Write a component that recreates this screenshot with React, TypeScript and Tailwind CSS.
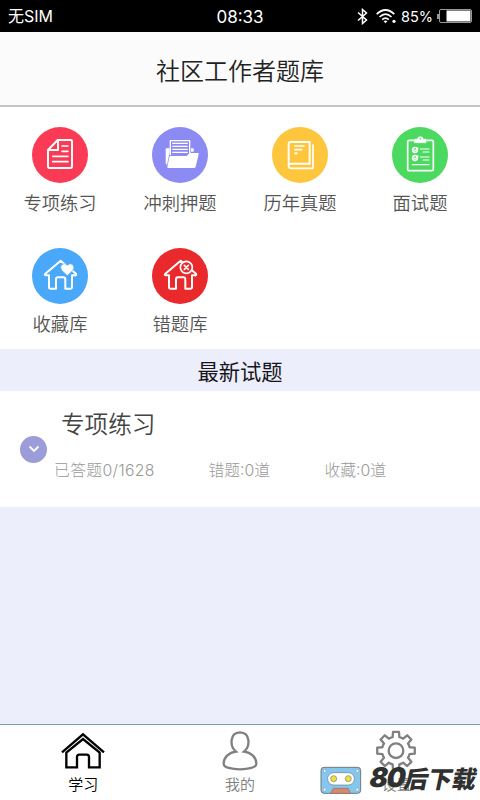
import type { ReactNode } from "react";

const line = {
  fill: "none",
  stroke: "#fff",
  strokeWidth: 6,
  strokeLinejoin: "round",
  strokeLinecap: "round",
} as const;

const HOUSE = "M76 101 L122 62 L168 101 Q171 107 163 106 L156 106 L156 142 Q156 146 151 146 L136 146 L136 119 Q136 112 130 112 L114 112 Q108 112 108 119 L108 146 L92 146 Q87 146 87 142 L87 106 L78 106 Q72 106 76 101Z";

const entries: { label: string; color: string; icon: ReactNode }[] = [
  {
    label: "专项练习",
    color: "bg-[#fb3b55]",
    icon: (
      <g {...line}>
        <path d="M113 59 H152 Q156 59 156 63 V138 Q156 143 151 143 H89 Q84 143 84 138 V89 Z" />
        <path d="M114 60 V89 H85" />
        <path d="M126 77H144M126 93H144M98 108H144M98 124H144" strokeWidth="5" />
      </g>
    ),
  },
  {
    label: "冲刺押题",
    color: "bg-[#8c8af3]",
    icon: (
      <g>
        <path d="M77 87 Q77 84 80 84 H89 V96 L81 134 Q77 132 77 127Z" fill="#fff" />
        <path d="M91 103 V61 H149 V103" {...line} strokeWidth="4" />
        <path d="M98 69H142M98 78H142M98 87H142M98 96H142" {...line} strokeWidth="3.5" />
        <path d="M153 84h8v10h-8z" fill="#fff" />
        <path d="M92 107 H140 L149 98 H174 Q177 98 176 102 L167 139 Q166 143 162 143 H85 Q81 143 82 139 L88 110 Q89 107 92 107Z" fill="#fff" />
      </g>
    ),
  },
  {
    label: "历年真题",
    color: "bg-[#fec63d]",
    icon: (
      <g {...line}>
        <path d="M93 65 H149 V130 H93 Q86 130 86 137 V72 Q86 65 93 65Z" />
        <path d="M86 136 Q86 144 94 144 H159 V74" strokeWidth="5" />
        <path d="M105 77H132M105 88H125M105 99H111" strokeWidth="5" />
      </g>
    ),
  },
  {
    label: "面试题",
    color: "bg-[#4bd960]",
    icon: (
      <g {...line} strokeWidth="5">
        <path d="M101 60 H87 Q83 60 83 64 V147 Q83 151 87 151 H156 Q160 151 160 147 V64 Q160 60 156 60 H141" />
        <path d="M104 57H112Q113 49 121 49T130 57H138V67H104Z" fill="#fff" strokeWidth="2" />
        <circle cx="121" cy="56" r="2.5" fill="#4bd960" stroke="none" />
        <circle cx="105" cy="89" r="7.5" strokeWidth="4" />
        <circle cx="105" cy="113" r="7.5" strokeWidth="4" />
        <path d="M101 88l4 4 9-9M101 112l4 4 9-9M121 86H147M129 95H147M121 110H147M129 119H147M97 133H147" strokeWidth="3.5" />
      </g>
    ),
  },
  {
    label: "收藏库",
    color: "bg-[#4aa8fa]",
    icon: (
      <g transform="translate(0 -4)">
        <path d={HOUSE} {...line} />
        <path d="M142 107 L125 91 Q119 81 125 74 Q134 67 142 76 Q150 67 158 74 Q165 81 159 91Z" fill="#fff" stroke="#4aa8fa" strokeWidth="2" />
      </g>
    ),
  },
  {
    label: "错题库",
    color: "bg-[#e9292b]",
    icon: (
      <g transform="translate(0 -4)">
        <path d={HOUSE} {...line} />
        <circle cx="139" cy="82" r="18" fill="#e9292b" stroke="#fff" strokeWidth="5" />
        <path d="M133 76l12 12M145 76l-12 12" {...line} strokeWidth="5" />
      </g>
    ),
  },
];

function StatusBar() {
  return (
    <div className="grid h-8 grid-cols-3 items-center bg-black px-2 text-white">
      <span className="pt-px font-[Inter,'Noto_Sans_CJK_SC',sans-serif] text-[16px] leading-[31px]">无SIM</span>
      <span className="pt-0.5 text-center font-[Inter,sans-serif] text-[17px] leading-7">08:33</span>
      <div className="flex items-center justify-end">
        <svg className="mr-[8px] h-[17px] w-[11px] shrink-0" viewBox="0 0 11 17" fill="none" stroke="#fff" strokeWidth="1.5">
          <path d="M1 4.5 L9.5 12 L5.5 15.5 V1.5 L9.5 5 L1 12.5" />
        </svg>
        <svg className="mr-[5px] h-4 w-5 shrink-0" viewBox="0 0 20 16" fill="none" stroke="#fff" strokeWidth="1.7">
          <path d="M.7 6.2 Q9.5 -2.2 18.3 6.2M3.5 9 Q9.5 3.2 15.5 9M6.2 11.7 Q9.5 8.6 12.8 11.7" />
          <path d="M7.5 13 Q9.5 11.8 11.5 13 L9.5 15.2Z" fill="#fff" stroke="none" />
          <circle cx="18" cy="13.3" r="1.6" fill="#fff" stroke="none" />
        </svg>
        <span className="mr-[4px] pt-0.5 font-[Inter,sans-serif] text-[14.5px] leading-7">85%</span>
        <svg className="h-3.5 w-[35px] shrink-0" viewBox="0 0 35 14">
          <rect x="2.5" y=".5" width="32" height="13" rx="1.5" fill="none" stroke="#999" />
          <path d="M0 5h2v5H0z" fill="#999" />
          <rect x="9.5" y="1.5" width="24" height="11" fill="#fff" />
        </svg>
      </div>
    </div>
  );
}

function Tab({ label, active, children }: { label: string; active?: boolean; children: ReactNode }) {
  return (
    <div className={active ? "flex flex-1 flex-col items-center text-black" : "flex flex-1 flex-col items-center text-[#808080]"}>
      <svg className="mt-[5px] h-[42px] w-[44px] shrink-0" viewBox="0 0 132 126" fill="none" stroke="currentColor" strokeWidth="7">
        {children}
      </svg>
      <span className="text-[15px] leading-6 font-[350]">{label}</span>
    </div>
  );
}

// Eight teeth around the hub of the settings icon
function gearPath(cx: number, cy: number) {
  const at = (r: number, deg: number) => {
    const a = (deg * Math.PI) / 180;
    return `${(cx + r * Math.sin(a)).toFixed(1)} ${(cy - r * Math.cos(a)).toFixed(1)}`;
  };
  const teeth = [0, 45, 90, 135, 180, 225, 270, 315].map(
    (d) => `${at(42, d - 14)} L${at(57, d - 9)} L${at(57, d + 9)} L${at(42, d + 14)} A42 42 0 0 1 `
  );
  return `M${teeth.join("")}${at(42, -14)}Z`;
}

function Watermark() {
  return (
    <div className="absolute bottom-0 left-[320px] flex h-[37px] w-[160px] items-start">
      <svg className="mt-[3px] h-[29px] w-[42px] shrink-0" viewBox="0 0 126 87">
        <rect x="3" y="4" width="119" height="78" rx="9" fill="#83c7ee" stroke="#777" strokeWidth="3" />
        <rect x="23" y="20" width="80" height="37" rx="18" fill="#fff" stroke="#777" strokeWidth="2" />
        <circle cx="41" cy="38" r="9" fill="#eee23c" stroke="#777" strokeWidth="2" />
        <circle cx="85" cy="38" r="9" fill="#eee23c" stroke="#777" strokeWidth="2" />
        <path d="M32 82L40 67H84L92 82Z" fill="#df8765" stroke="#777" strokeWidth="2" />
        <g fill="#fff" stroke="#777">
          <circle cx="14" cy="15" r="4" />
          <circle cx="112" cy="15" r="4" />
          <circle cx="14" cy="71" r="4" />
          <circle cx="112" cy="71" r="4" />
        </g>
      </svg>
      <span className="mt-px ml-[8px] flex -skew-x-12 text-[24px] leading-[27px] font-black whitespace-nowrap text-[#303030]">
        <span className="w-[35px] font-[Inter,sans-serif] text-[27px] tracking-[-1.2px]">80</span>
        <span>后下载</span>
      </span>
    </div>
  );
}

export default function App() {
  return (
    <div className="relative flex h-[800px] w-[480px] flex-col overflow-hidden bg-[#eceefb] font-['Noto_Sans_CJK_SC',sans-serif]">
      <StatusBar />
      <header className="flex h-[75px] shrink-0 items-center justify-center border-b-2 border-[#c4c4c4] bg-[#fbfbfb] pt-[3px]">
        <h1 className="text-[24px] leading-9 font-[350] text-[#222]">社区工作者题库</h1>
      </header>

      <section className="grid h-[242px] shrink-0 grid-cols-4 content-start bg-white pt-[19.5px]">
        {entries.map((entry) => (
          <div className="flex h-[121.5px] flex-col items-center" key={entry.label}>
            <div className={`size-14 rounded-full ${entry.color}`}>
              <svg className="size-14" viewBox="36 20 168 168">{entry.icon}</svg>
            </div>
            <p className="mt-[5px] text-[18.3px] leading-7 font-[350] text-[#555]">{entry.label}</p>
          </div>
        ))}
      </section>

      <h2 className="h-[42px] shrink-0 pt-[2px] text-center text-[21.3px] leading-[39px] text-[#15151a]">最新试题</h2>

      <section className="flex h-[116px] shrink-0 items-center bg-white pl-5">
        <div className="flex size-[27px] shrink-0 items-center justify-center rounded-full bg-[#9b9cd8]">
          <svg className="h-2 w-3" viewBox="0 0 12 8" fill="none" stroke="#fff" strokeWidth="1.9">
            <path d="M1.5 1.5 L6 6 L10.5 1.5" />
          </svg>
        </div>
        <div className="flex flex-col pb-[10px] pl-[7px]">
          <h3 className="pl-[7px] text-[23.6px] leading-9 font-[350] text-[#444]">专项练习</h3>
          <div className="mt-[18px] flex font-[Inter,'Noto_Sans_CJK_SC',sans-serif] text-[15.8px] leading-6 font-light text-[#999]">
            <span className="w-[154.5px] tracking-[0.35px]">已答题0/1628</span>
            <span className="w-[116px]">错题:0道</span>
            <span>收藏:0道</span>
          </div>
        </div>
      </section>

      <nav className="mt-auto flex h-[76px] shrink-0 border-t border-[#6fa3a8] bg-white px-[5px]">
        <Tab label="学习" active>
          <path d="M3 67 L66 13 L129 67" />
          <path d="M16 68 L66 27 L116 68 V112 H84 V81 Q84 74 77 74 H55 Q48 74 48 81 V112 H16Z" />
        </Tab>
        <Tab label="我的">
          <path d="M54 65 C35 49 34 8 66 7 C98 8 97 49 78 65 C100 67 115 83 115 101 C115 124 17 124 17 101 C17 83 32 67 54 65Z" />
        </Tab>
        <Tab label="设置">
          <path d={gearPath(63, 62)} strokeLinejoin="round" />
          <circle cx="63" cy="62" r="22" />
        </Tab>
      </nav>
      <Watermark />
    </div>
  );
}
